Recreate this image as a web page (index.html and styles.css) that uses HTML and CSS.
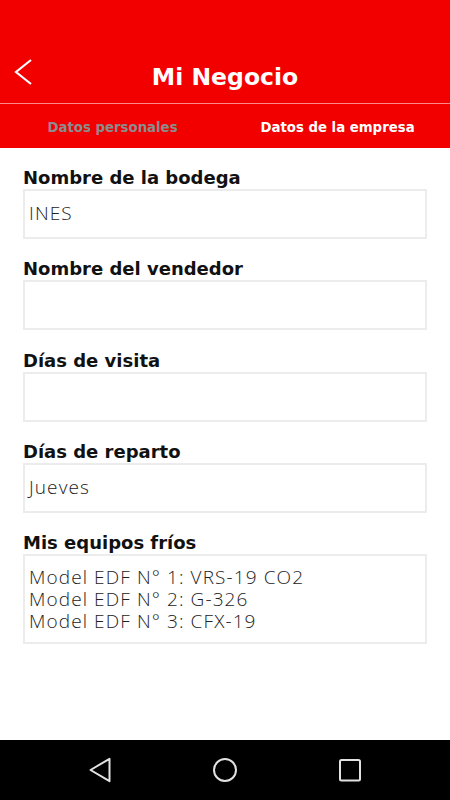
FILE: index.html
```html
<!DOCTYPE html>
<html lang="es">
<head>
<meta charset="utf-8">
<title>Mi Negocio</title>
<link rel="stylesheet" href="styles.css">
</head>
<body>
<div class="screen">
  <header class="appbar">
    <div class="toolbar">
      <svg class="back" width="20" height="28" viewBox="0 0 20 28"><polyline points="17,2 2,14 17,26" fill="none" stroke="#fff" stroke-width="2.2"/></svg>
      <h1 class="title">Mi Negocio</h1>
    </div>
    <nav class="tabs">
      <div class="tab">Datos personales</div>
      <div class="tab active">Datos de la empresa</div>
    </nav>
  </header>
  <main class="form">
    <div class="field">
      <label class="label">Nombre de la bodega</label>
      <div class="input">INES</div>
    </div>
    <div class="field">
      <label class="label">Nombre del vendedor</label>
      <div class="input"></div>
    </div>
    <div class="field">
      <label class="label">Días de visita</label>
      <div class="input"></div>
    </div>
    <div class="field">
      <label class="label">Días de reparto</label>
      <div class="input">Jueves</div>
    </div>
    <div class="field">
      <label class="label">Mis equipos fríos</label>
      <div class="input multi">
        <div class="line">Model EDF N° 1: VRS-19 CO2</div>
        <div class="line">Model EDF N° 2: G-326</div>
        <div class="line">Model EDF N° 3: CFX-19</div>
      </div>
    </div>
  </main>
  <footer class="navbar">
    <svg width="24" height="26" viewBox="0 0 24 26"><polygon points="21.5,1.8 21.5,24.2 2.5,13" fill="none" stroke="#e2e2e2" stroke-width="2" stroke-linejoin="round"/></svg>
    <svg width="26" height="26" viewBox="0 0 26 26"><circle cx="13" cy="13" r="11" fill="none" stroke="#e2e2e2" stroke-width="2"/></svg>
    <svg width="24" height="24" viewBox="0 0 24 24"><rect x="2" y="2" width="20" height="20.5" rx="1.5" fill="none" stroke="#e2e2e2" stroke-width="2"/></svg>
  </footer>
</div>
</body>
</html>
```
FILE: styles.css
```css
* { box-sizing: border-box; margin: 0; padding: 0; }
html, body { width: 450px; height: 800px; background: #fff; }
body { font-family: "DejaVu Sans", "Noto Sans", sans-serif; }
.screen { width: 450px; height: 800px; display: flex; flex-direction: column; }
.appbar { background: #f20000; height: 148px; display: flex; flex-direction: column; }
.toolbar { height: 104px; border-bottom: 1px solid #fb8a8a; display: flex; align-items: center; padding-top: 50px; position: relative; }
.back { position: absolute; left: 14px; top: 58px; }
.title { flex: 1; text-align: center; color: #fff; font-size: 23.5px; font-weight: bold; letter-spacing: 0; }
.tabs { flex: 1; display: flex; align-items: center; }
.tab { flex: 1; text-align: center; color: #8c8c8c; font-size: 13.3px; font-weight: bold; padding-top: 2px; }
.tab.active { color: #fff; }
.form { flex: 1; padding: 19px 23px 0; display: flex; flex-direction: column; gap: 19.25px; }
.field { display: flex; flex-direction: column; }
.label { font-size: 18px; font-weight: bold; color: #111; line-height: 22px; }
.input { height: 50px; border: 2px solid #ececec; padding: 11px 4px 0; font-family: "Open Sans", Lato, sans-serif; font-weight: 300; font-size: 19px; letter-spacing: 1.1px; color: #222; line-height: 22px; }
.input.multi { height: 90px; padding-top: 10px; }
.line { line-height: 22px; }
.navbar { height: 60px; background: #000; display: flex; align-items: center; justify-content: center; gap: 100px; }
```
